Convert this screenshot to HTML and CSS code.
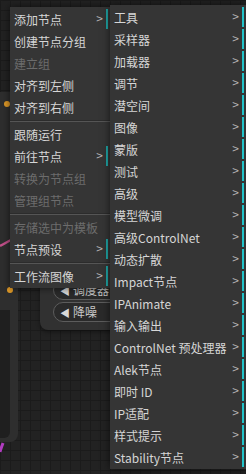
FILE: index.html
```html
<!DOCTYPE html>
<html lang="zh">
<head>
<meta charset="utf-8">
<link rel="stylesheet" href="styles.css">
</head>
<body>
<div class="canvas">
  <div class="node node-left">
    <div class="widget-dark"></div>
  </div>
  <div class="node node-mid">
    <div class="pill"><span class="tri">◀</span>调度器</div>
    <div class="pill"><span class="tri">◀</span>降噪</div>
  </div>
  <span class="slot slot-a"></span>
  <span class="slot slot-b"></span>
  <svg class="links" width="246" height="474" viewBox="0 0 246 474">
    <path d="M0 246 C4 244 7 242 11 240" stroke="#c2508a" stroke-width="2.5" fill="none"/>
    <path d="M0 452 C1 448 2 446 3 443" stroke="#b13cc0" stroke-width="3" fill="none"/>
  </svg>

  <div class="menu menu-main">
    <div class="entry sub">添加节点</div>
    <div class="entry">创建节点分组</div>
    <div class="entry disabled">建立组</div>
    <div class="entry">对齐到左侧</div>
    <div class="entry">对齐到右侧</div>
    <div class="sep"></div>
    <div class="entry">跟随运行</div>
    <div class="entry sub">前往节点</div>
    <div class="entry disabled">转换为节点组</div>
    <div class="entry disabled">管理组节点</div>
    <div class="sep"></div>
    <div class="entry disabled">存储选中为模板</div>
    <div class="entry sub">节点预设</div>
    <div class="sep"></div>
    <div class="entry sub">工作流图像</div>
  </div>

  <div class="menu menu-sub">
    <div class="entry sub">工具</div>
    <div class="entry sub">采样器</div>
    <div class="entry sub">加载器</div>
    <div class="entry sub">调节</div>
    <div class="entry sub">潜空间</div>
    <div class="entry sub">图像</div>
    <div class="entry sub">蒙版</div>
    <div class="entry sub">测试</div>
    <div class="entry sub">高级</div>
    <div class="entry sub">模型微调</div>
    <div class="entry sub">高级ControlNet</div>
    <div class="entry sub">动态扩散</div>
    <div class="entry sub">Impact节点</div>
    <div class="entry sub">IPAnimate</div>
    <div class="entry sub">输入输出</div>
    <div class="entry sub">ControlNet 预处理器</div>
    <div class="entry sub">Alek节点</div>
    <div class="entry sub">即时 ID</div>
    <div class="entry sub">IP适配</div>
    <div class="entry sub">样式提示</div>
    <div class="entry sub">Stability节点</div>
  </div>
</div>
</body>
</html>
```
FILE: styles.css
```css
* { box-sizing: border-box; }
html, body { margin: 0; padding: 0; }
body {
  width: 246px;
  height: 474px;
  overflow: hidden;
  background-color: #222222;
  background-image:
    linear-gradient(to right, #1b1b1b 1px, transparent 1px),
    linear-gradient(to bottom, #1b1b1b 1px, transparent 1px);
  background-size: 10px 10px;
  font-family: "Noto Sans CJK SC", "Noto Sans", sans-serif;
}
.canvas { position: relative; width: 246px; height: 474px; }

.node { position: absolute; background: #2e2e2e; border-radius: 8px; }
.node-left { left: -100px; top: 92px; width: 118px; height: 350px; }
.widget-dark { position: absolute; left: 0; right: 8px; top: 218px; bottom: 4px; background: #1f1f1f; border-radius: 0 0 6px 0; }
.node-mid {
  left: 40px; top: 230px; width: 120px; height: 100px;
  background: #313131;
  display: flex; flex-direction: column; justify-content: flex-end;
  gap: 2px; padding: 0 0 8px 13px;
  box-shadow: 0 2px 4px rgba(0,0,0,.4);
}
.pill {
  height: 20px;
  border: 1px solid #5c5c5c;
  border-radius: 10px;
  background: #2a2a2a;
  color: #c8c8c8;
  font-size: 12px;
  line-height: 18px;
  padding-left: 6px;
  white-space: nowrap;
}
.tri { color: #d8d8d8; font-size: 10px; margin-right: 3px; }

.slot { position: absolute; width: 6px; height: 6px; border-radius: 50%; background: #e09a28; }
.slot-a { left: 4px; top: 101px; }
.slot-b { left: 7px; top: 287px; }
.links { position: absolute; left: 0; top: 0; }

.menu {
  position: absolute;
  background: #353535;
  padding: 2px 0;
  display: flex;
  flex-direction: column;
  gap: 2px;
  box-shadow: 0 0 8px rgba(0,0,0,.6);
  font-size: 12px;
}
.menu-main { left: 10px; top: 7px; width: 100px; }
.menu-sub { left: 110px; top: 5px; width: 136px; }
.entry {
  position: relative;
  margin: 0 2px;
  height: 20px;
  line-height: 21px;
  padding-left: 2px;
  color: #d6d6d6;
  white-space: nowrap;
}
.entry.sub { border-right: 2px solid #1fa3a3; }
.menu-sub .entry.sub { border-right-color: #22c3c9; }
.entry.sub::after {
  content: ">";
  position: absolute;
  right: 3px;
  top: -2px;
  color: #b4b4b4;
}
.entry.disabled { color: #6c6c6c; }
.sep { height: 0; margin-top: 1px; border-top: 1px solid #2c2c2c; border-bottom: 1px solid #555555; }
```
